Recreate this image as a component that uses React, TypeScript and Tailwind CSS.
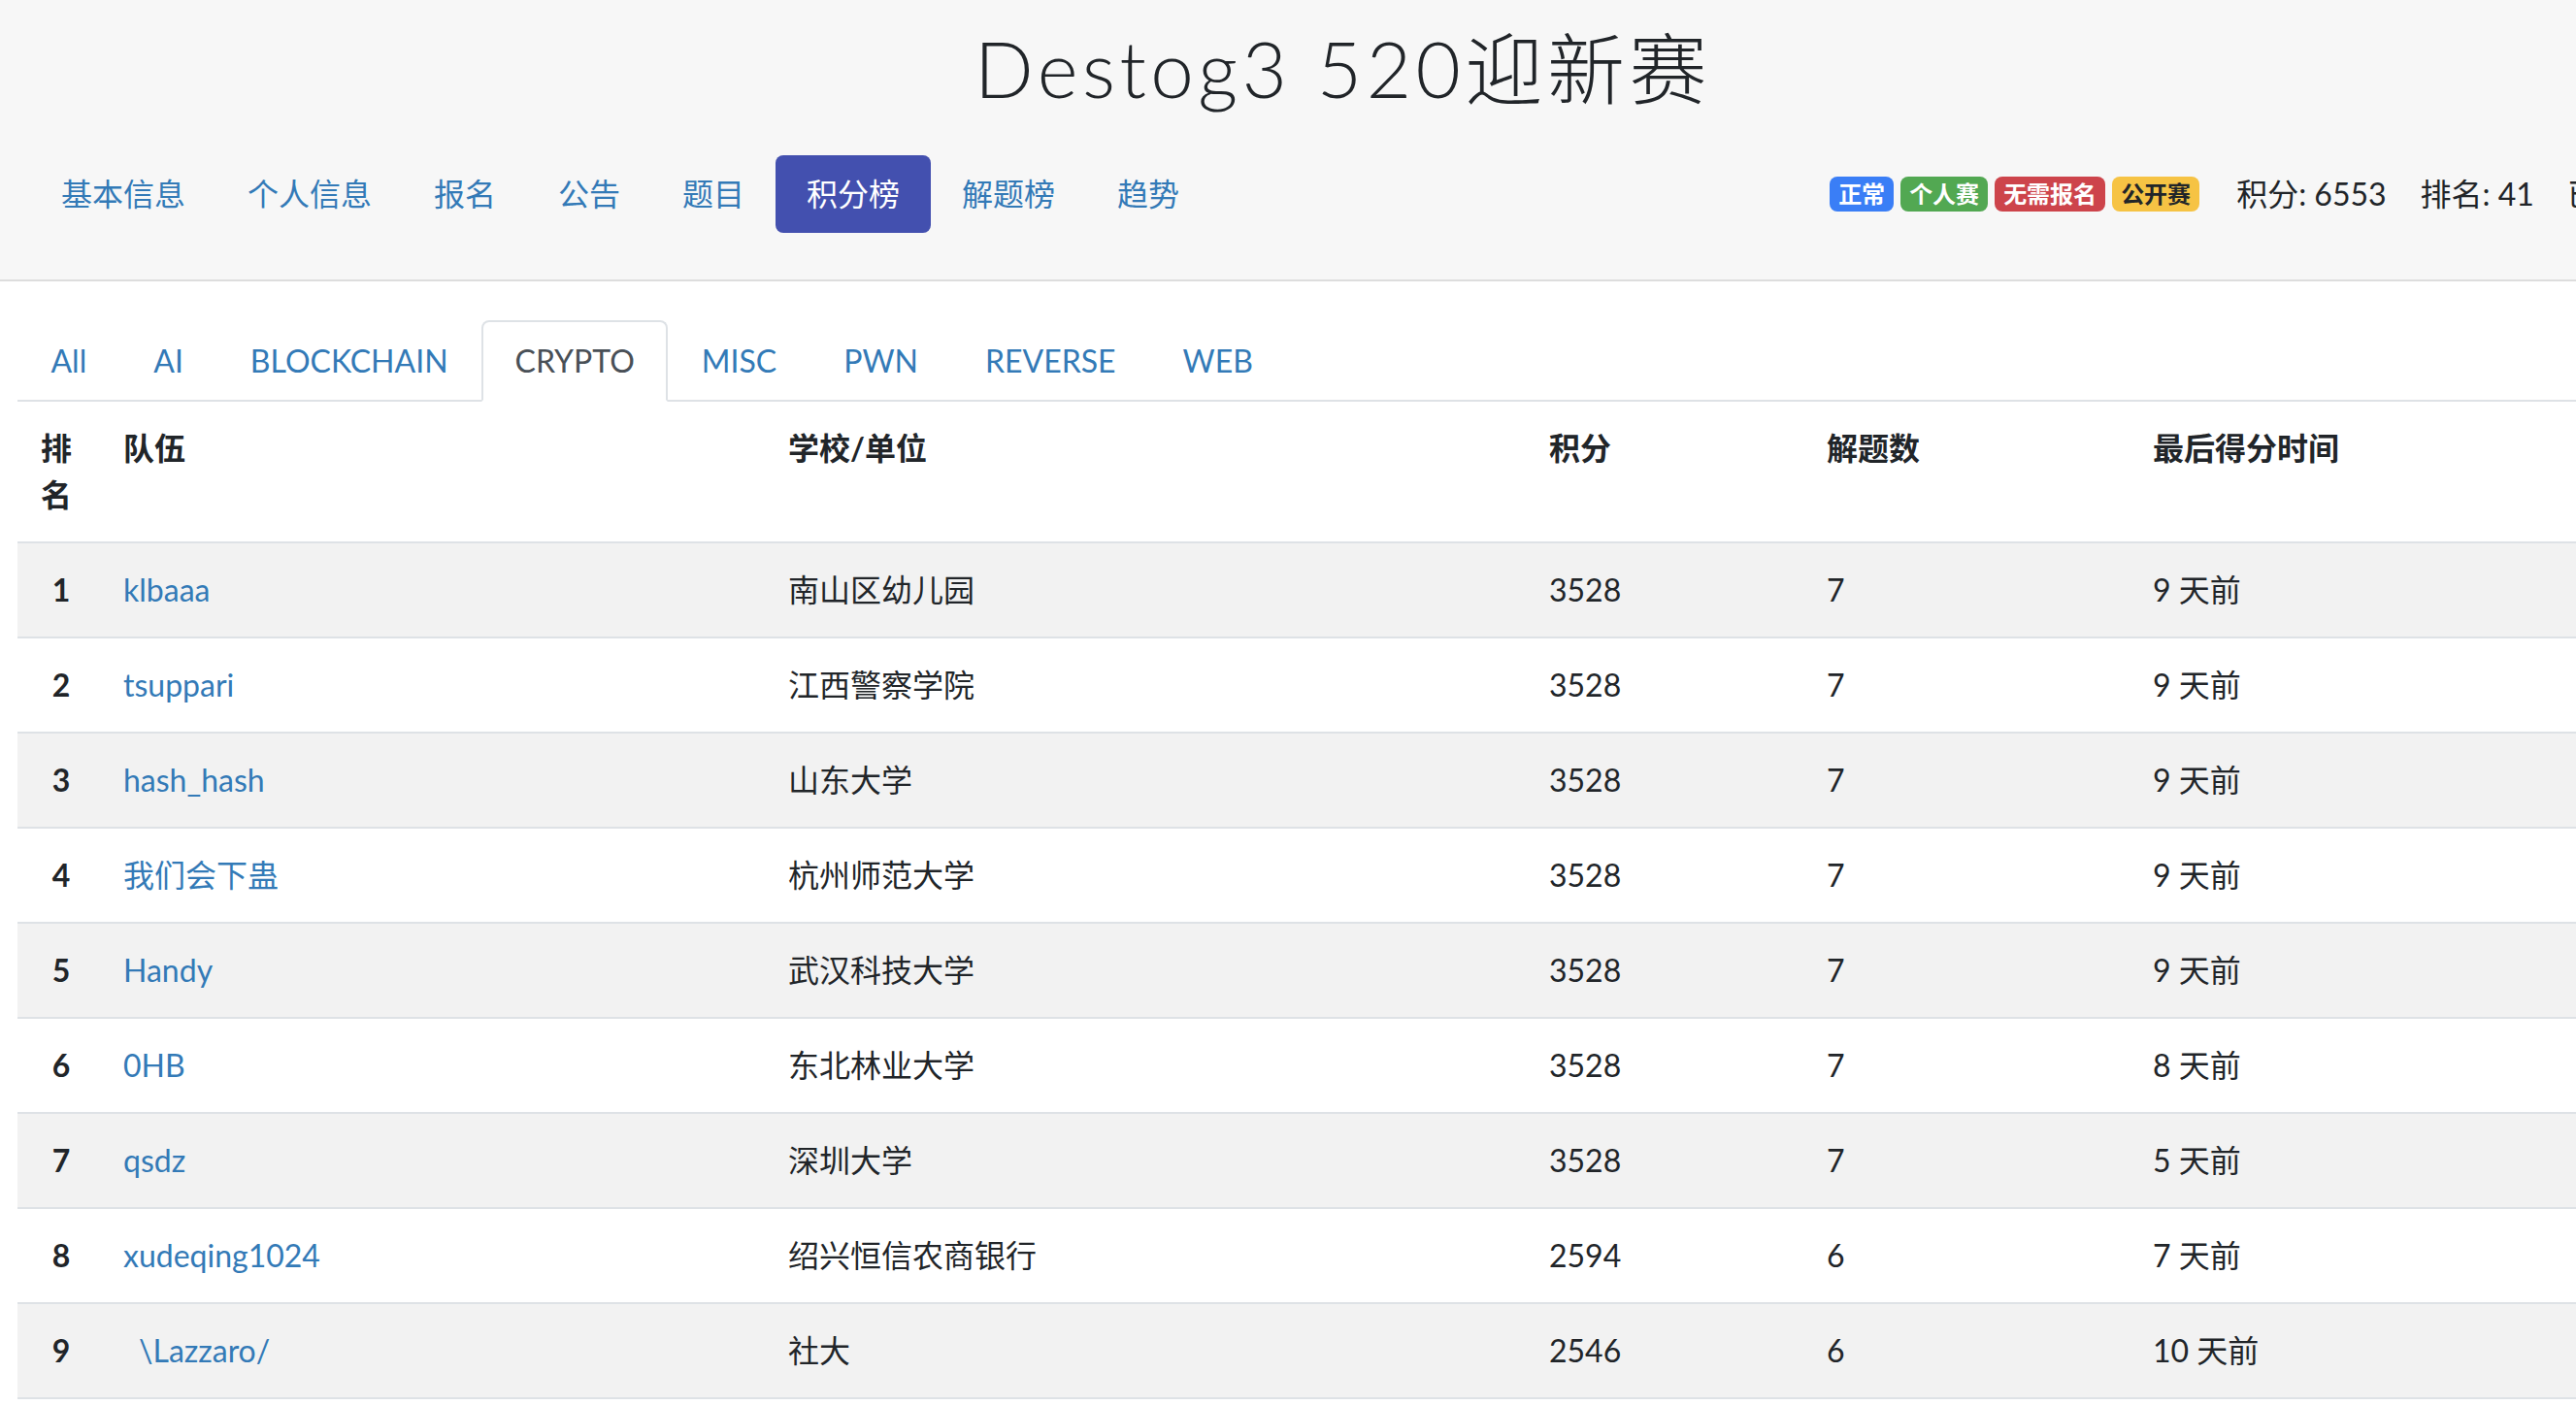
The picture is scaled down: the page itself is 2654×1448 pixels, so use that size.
import React from "react";

const navItems = ["基本信息", "个人信息", "报名", "公告", "题目", "积分榜", "解题榜", "趋势"];
const tabs = ["All", "AI", "BLOCKCHAIN", "CRYPTO", "MISC", "PWN", "REVERSE", "WEB"];

const badges = [
  { label: "正常", cls: "bg-[#3a7ef6] text-white" },
  { label: "个人赛", cls: "bg-[#52a852] text-white" },
  { label: "无需报名", cls: "bg-[#cd444b] text-white" },
  { label: "公开赛", cls: "bg-[#f6c344] text-[#212529]" },
];

const rows = [
  { rank: 1, team: "klbaaa", school: "南山区幼儿园", score: 3528, solved: 7, time: "9 天前" },
  { rank: 2, team: "tsuppari", school: "江西警察学院", score: 3528, solved: 7, time: "9 天前" },
  { rank: 3, team: "hash_hash", school: "山东大学", score: 3528, solved: 7, time: "9 天前" },
  { rank: 4, team: "我们会下蛊", school: "杭州师范大学", score: 3528, solved: 7, time: "9 天前" },
  { rank: 5, team: "Handy", school: "武汉科技大学", score: 3528, solved: 7, time: "9 天前" },
  { rank: 6, team: "0HB", school: "东北林业大学", score: 3528, solved: 7, time: "8 天前" },
  { rank: 7, team: "qsdz", school: "深圳大学", score: 3528, solved: 7, time: "5 天前" },
  { rank: 8, team: "xudeqing1024", school: "绍兴恒信农商银行", score: 2594, solved: 6, time: "7 天前" },
  { rank: 9, team: "\u2002\\Lazzaro/", school: "社大", score: 2546, solved: 6, time: "10 天前" },
  { rank: 10, team: "", school: "", score: "", solved: "", time: "" },
];

export default function App() {
  return (
    <div className="min-h-screen w-full overflow-hidden bg-white font-[Lato,'Noto_Sans_CJK_SC',sans-serif] text-[32px] leading-[48px] text-[#212529]">
      <div className="w-[2767px]">
        {/* top header */}
        <header className="h-[290px] border-b-2 border-[#dddddd] bg-[#f7f7f7]">
          <h1 className="pt-[22px] text-center text-[80px] font-light leading-[96px] tracking-[4.5px] text-[#212529]">
            Destog3 520迎新赛
          </h1>
          <div className="mt-[42px] flex items-center whitespace-nowrap pl-[31px]">
            <nav className="flex shrink-0">
              {navItems.map((n) => (
                <a
                  key={n}
                  className={
                    n === "积分榜"
                      ? "shrink-0 rounded-[8px] bg-[#4350af] px-[32px] py-[16px] text-white"
                      : "shrink-0 px-[32px] py-[16px] text-[#337ab7]"
                  }
                >
                  {n}
                </a>
              ))}
            </nav>
            <div className="ml-[638px] flex shrink-0 items-center">
              <div className="flex shrink-0 gap-[7px]">
                {badges.map((b) => (
                  <span key={b.label} className={`shrink-0 rounded-[8px] px-[9px] text-[24px] font-bold leading-[36px] ${b.cls}`}>
                    {b.label}
                  </span>
                ))}
              </div>
              <span className="ml-[38px] shrink-0">积分: 6553</span>
              <span className="ml-[35px] shrink-0">排名: 41</span>
              <span className="ml-[34px] shrink-0">已解题: 3</span>
            </div>
          </div>
        </header>

        {/* board */}
        <div className="px-[18px] pt-[40px]">
          <ul className="flex border-b-2 border-[#dee2e6]">
            {tabs.map((t) => (
              <li key={t} className="-mb-[2px]">
                <a
                  className={
                    t === "CRYPTO"
                      ? "block rounded-t-[8px] border-2 border-[#dee2e6] border-b-white bg-white px-[32.5px] py-[16px] text-[#495057]"
                      : "block rounded-t-[8px] border-2 border-transparent px-[32.5px] py-[16px] text-[#337ab7]"
                  }
                >
                  {t}
                </a>
              </li>
            ))}
          </ul>

          <table className="w-full table-fixed border-collapse">
            <colgroup>
              <col className="w-[85px]" />
              <col className="w-[685px]" />
              <col className="w-[784px]" />
              <col className="w-[286px]" />
              <col className="w-[336px]" />
              <col />
            </colgroup>
            <thead>
              <tr>
                <th className="p-[24px] pr-[19px] text-left align-top font-bold">排名</th>
                <th className="p-[24px] text-left align-top font-bold">队伍</th>
                <th className="p-[24px] text-left align-top font-bold">学校/单位</th>
                <th className="p-[24px] text-left align-top font-bold">积分</th>
                <th className="p-[24px] text-left align-top font-bold">解题数</th>
                <th className="p-[24px] text-left align-top font-bold">最后得分时间</th>
              </tr>
            </thead>
            <tbody>
              {rows.map((r) => (
                <tr key={r.rank} className={`border-t-2 border-[#dee2e6] ${r.rank % 2 === 1 ? "bg-[#f2f2f2]" : "bg-white"}`}>
                  <td className="p-[24px] pr-[19px] text-center font-bold">{r.rank}</td>
                  <td className="whitespace-pre p-[24px]">
                    <a className="text-[#337ab7]">{r.team}</a>
                  </td>
                  <td className="p-[24px]">{r.school}</td>
                  <td className="p-[24px]">{r.score}</td>
                  <td className="p-[24px]">{r.solved}</td>
                  <td className="p-[24px]">{r.time}</td>
                </tr>
              ))}
            </tbody>
          </table>
        </div>
      </div>
    </div>
  );
}
